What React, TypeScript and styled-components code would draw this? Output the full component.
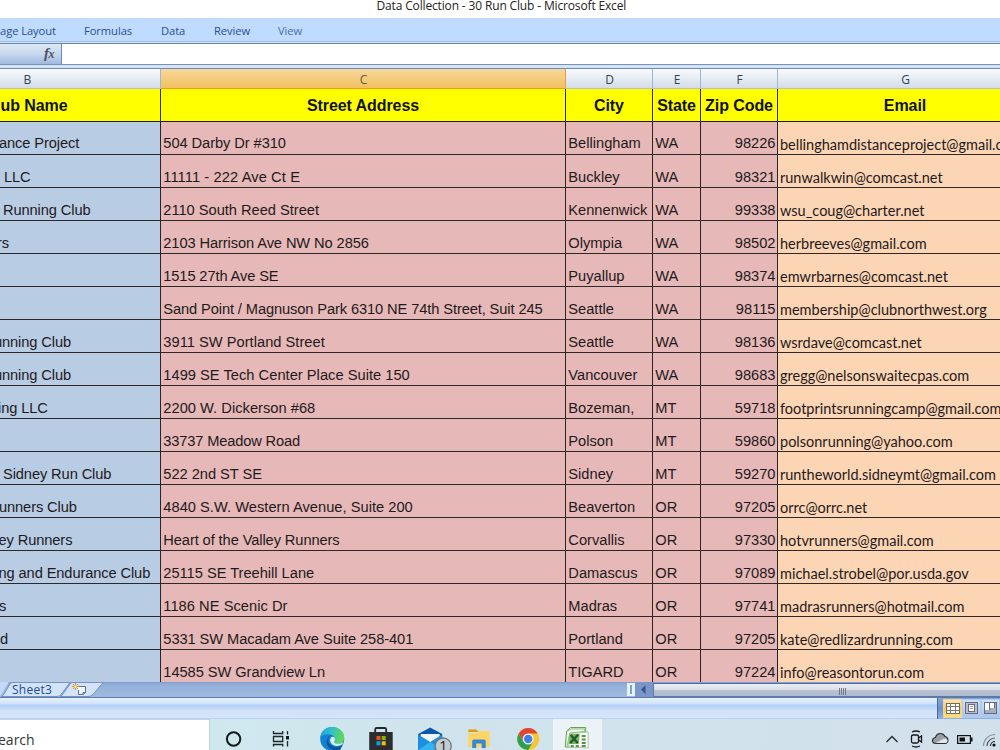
import React from "react";
import styled, { createGlobalStyle } from "styled-components";

const ui = `"Open Sans", "Noto Sans", sans-serif`;

const Global = createGlobalStyle`
  * { box-sizing: border-box; }
  body { margin: 0; background: #fff; overflow: hidden; }
`;

const Window = styled.div`
  width: 1000px;
  height: 750px;
  overflow: hidden;
  display: flex;
  flex-direction: column;
  background: #fff;
`;

const TitleBar = styled.header`
  height: 18px;
  padding-left: 376.5px;
  font: 12px/12px ${ui};
  letter-spacing: -0.15px;
  color: #222;
  white-space: nowrap;
`;

const Ribbon = styled.nav`
  height: 26px;
  display: flex;
  background: linear-gradient(#bfdbff 0 23px, #a5c2e6 23px 24px, #cfe0f5 24px 25px, #6788b3 25px);
  font: 11.2px/25px ${ui};
  letter-spacing: -0.08px;
  color: #2b4e94;
  white-space: nowrap;
`;

const RibbonTab = styled.span<{ $w: number; $soft?: boolean }>`
  width: ${(p) => p.$w}px;
  flex: none;
  color: ${(p) => (p.$soft ? "#4d6ea9" : "inherit")};
`;

const FormulaBar = styled.div`
  height: 25px;
  display: flex;
  background: linear-gradient(#fff 0 20px, #6e93c3 20px 21px, #d8e4f3 21px 24px, #6a8cba 24px);
`;

const FxButton = styled.div`
  width: 62px;
  height: 20px;
  padding-left: 44px;
  border-right: 1px solid #6e8db5;
  background: linear-gradient(#dfe9f6, #c4d5ec 55%, #9fb9de);
  font: italic bold 15px/18px "Liberation Serif", serif;
  color: #4c5261;
  letter-spacing: -0.5px;
  small { font-size: 12px; }
`;

const Sheet = styled.main`
  height: 613px;
  flex: none;
  overflow: hidden;
`;

const columns = "161px 405px 87px 48px 77px 255px";

const Letters = styled.div`
  display: grid;
  grid-template-columns: ${columns};
  height: 20px;
`;

const Letter = styled.div<{ $active?: boolean; $clip?: number }>`
  height: 20px;
  padding: 1px ${(p) => p.$clip ?? 0}px 0 1px;
  text-align: center;
  font: 12px/19px ${ui};
  color: ${(p) => (p.$active ? "#5c5c48" : "#33444f")};
  border-right: 1px solid ${(p) => (p.$active ? "#ee9a42" : "#9eb6ce")};
  border-bottom: 1px solid ${(p) => (p.$active ? "#f29536" : "#b4c3d2")};
  background: ${(p) =>
    p.$active ? "linear-gradient(#f8d79b, #f1c15f)" : "linear-gradient(#f8fafc, #e6ecf3 50%, #d3dbe8)"};
`;

const Row = styled.div`
  display: grid;
  grid-template-columns: ${columns};
  height: 33px;
`;

const Head = styled.div<{ $clip?: number }>`
  height: 33px;
  padding: 1px ${(p) => p.$clip ?? 0}px 0 0;
  background: #ffff00;
  border-right: 1px solid #2b2b10;
  border-bottom: 1px solid #1e1e08;
  font: bold 16px/31px "Liberation Sans", Arial, sans-serif;
  letter-spacing: -0.08px;
  text-align: ${(p) => (p.$clip ? "right" : "center")};
  white-space: nowrap;
  color: #111;
`;

const Cell = styled.div<{ $tone: "blue" | "rose" | "peach"; $right?: boolean; $track?: number; $indent?: number; $up?: boolean }>`
  height: 33px;
  padding: ${(p) => (p.$up ? 7 : 8)}px ${(p) => (p.$right ? 1.5 : 2)}px 0 ${(p) => (p.$tone === "rose" ? 2.3 : 2)}px;
  text-indent: ${(p) => p.$indent ?? 0}px;
  background: ${(p) => ({ blue: "#b8cce4", rose: "#e6b8b7", peach: "#fcd5b4" })[p.$tone]};
  border-right: 1px solid #2e2323;
  border-bottom: 1px solid #2e2828;
  font-family: ${(p) => (p.$tone === "peach" ? `Lato, sans-serif` : `"Liberation Sans", Arial, sans-serif`)};
  font-size: ${(p) => (p.$tone === "peach" ? 14.5 : 14.67)}px;
  line-height: 29px;
  color: #1f1a1c;
  text-align: ${(p) => (p.$right ? "right" : "left")};
  letter-spacing: ${(p) => p.$track ?? 0}px;
  white-space: nowrap;
  overflow: hidden;
`;

/* name, name indent, street, street tracking, city, state, zip, email */
type Club = [string, number, string, number, string, string, string, string];
const clubs: Club[] = [
  ["ance Project", -3, "504 Darby Dr #310", -0.07, "Bellingham", "WA", "98226", "bellinghamdistanceproject@gmail.com"],
  ["LLC", 2, "11111 - 222 Ave Ct E", 0.1, "Buckley", "WA", "98321", "runwalkwin@comcast.net"],
  ["Running Club", 1, "2110 South Reed Street", -0.02, "Kennenwick", "WA", "99338", "wsu_coug@charter.net"],
  ["rs", -5, "2103 Harrison Ave NW No 2856", -0.1, "Olympia", "WA", "98502", "herbreeves@gmail.com"],
  ["", 0, "1515 27th Ave SE", -0.12, "Puyallup", "WA", "98374", "emwrbarnes@comcast.net"],
  ["", 0, "Sand Point / Magnuson Park 6310 NE 74th Street, Suit 245", -0.11, "Seattle", "WA", "98115", "membership@clubnorthwest.org"],
  ["unning Club", -8, "3911 SW Portland Street", 0.02, "Seattle", "WA", "98136", "wsrdave@comcast.net"],
  ["unning Club", -8, "1499 SE Tech Center Place Suite 150", 0.02, "Vancouver", "WA", "98683", "gregg@nelsonswaitecpas.com"],
  ["ing LLC", -4, "2200 W. Dickerson #68", 0.02, "Bozeman,", "MT", "59718", "footprintsrunningcamp@gmail.com"],
  ["", 0, "33737 Meadow Road", -0.16, "Polson", "MT", "59860", "polsonrunning@yahoo.com"],
  ["Sidney Run Club", 1, "522 2nd ST SE", -0.04, "Sidney", "MT", "59270", "runtheworld.sidneymt@gmail.com"],
  ["unners Club", -3, "4840 S.W. Western Avenue, Suite 200", 0.02, "Beaverton", "OR", "97205", "orrc@orrc.net"],
  ["ey Runners", -3.5, "Heart of the Valley Runners", -0.1, "Corvallis", "OR", "97330", "hotvrunners@gmail.com"],
  ["ng and Endurance Club", -3.5, "25115 SE Treehill Lane", -0.02, "Damascus", "OR", "97089", "michael.strobel@por.usda.gov"],
  ["s", -3, "1186 NE Scenic Dr", 0.04, "Madras", "OR", "97741", "madrasrunners@hotmail.com"],
  ["d", -2, "5331 SW Macadam Ave Suite 258-401", -0.07, "Portland", "OR", "97205", "kate@redlizardrunning.com"],
  ["", 0, "14585 SW Grandview Ln", -0.06, "TIGARD", "OR", "97224", "info@reasontorun.com"],
];

const TabBar = styled.div`
  height: 16px;
  flex: none;
  display: flex;
  background: linear-gradient(#7f9fd0, #93b0da 3px, #9fb9de 13px, #9cb7dd 15px, #5a7db4 15px);
`;

const SheetTabs = styled.div`
  position: relative;
  width: 627px;
  height: 15px;
`;

const TabName = styled.span`
  position: absolute;
  left: 12px;
  top: 0;
  font: 12px/16px ${ui};
  letter-spacing: 0.25px;
  color: #25489a;
`;

const SplitHandle = styled.div`
  width: 8px;
  height: 13px;
  margin-top: 1px;
  border: 2px solid #e8f2fc;
  border-width: 2px 3px;
  background: #7ea2ce;
`;

const ScrollArrow = styled.div`
  width: 18px;
  height: 15px;
  background: #7997c9;
  svg { display: block; }
`;

const Thumb = styled.div`
  flex: 1;
  height: 14px;
  margin-top: 1px;
  padding: 4px 0 0 185px;
  display: flex;
  gap: 1px;
  border: 1px solid #64779c;
  border-right: 0;
  border-top-color: #4f6ca8;
  background: linear-gradient(#e9edf4, #dbe0e9 45%, #b9c1d0 55%, #aebbd0);
`;

const Grip = styled.i`
  width: 1px;
  height: 7px;
  background: #747b88;
`;

const StatusBar = styled.footer`
  height: 21px;
  flex: none;
  display: flex;
  justify-content: flex-end;
  background: linear-gradient(#e9f2fe, #cfe1fb 6px, #b4d1f6 7px, #bcd6f9 10px, #cfe0f8 12px, #d7e5f9 20px, #b5d3fa 20px);
`;

const ViewPanel = styled.div`
  width: 63px;
  height: 21px;
  padding: 1px 0 1px 5px;
  border-left: 1px solid #46679f;
  background: linear-gradient(#86a9db, #6a90cb 50%, #8eb1e2);
  display: flex;
`;

const ViewButton = styled.div<{ $on?: boolean }>`
  width: 19px;
  height: 19px;
  flex: none;
  border: 1px solid ${(p) => (p.$on ? "#f3d58e" : "#aecbf0")};
  background: ${(p) => (p.$on ? "linear-gradient(#fde3ae, #f9c659 50%, #fbe08a)" : "linear-gradient(#cfe1f9, #a9c6ec)")};
  svg { display: block; }
`;

const TaskBar = styled.div`
  height: 31px;
  flex: none;
  display: flex;
  background: linear-gradient(90deg, #cfe8ee 209px, #d0e3ec 480px, #d2e0eb 1000px);
`;

const Search = styled.div`
  width: 210px;
  height: 31px;
  background: #fff;
  border-top: 1px solid #c9d3dc;
  border-right: 1px solid #c8d2d6;
  font: 14px/40px ${ui};
  color: #333;
  text-indent: -2px;
`;

const AppSlot = styled.div<{ $open?: boolean }>`
  width: 49px;
  height: 31px;
  background: ${(p) => (p.$open ? "#ebf3f9" : "transparent")};
  svg { display: block; }
`;

const Tray = styled.div`
  margin-left: auto;
  width: 120px;
  svg { display: block; }
`;

const Slot = ({ children, open }: { children: React.ReactNode; open?: boolean }) => (
  <AppSlot $open={open}>
    <svg width="49" height="31" viewBox="1.3 0 49 31">{children}</svg>
  </AppSlot>
);

export default function App() {
  return (
    <>
      <Global />
      <Window>
        <TitleBar>Data Collection - 30 Run Club - Microsoft Excel</TitleBar>
        <Ribbon>
          <RibbonTab $w={84}>age Layout</RibbonTab>
          <RibbonTab $w={77}>Formulas</RibbonTab>
          <RibbonTab $w={53}>Data</RibbonTab>
          <RibbonTab $w={64}>Review</RibbonTab>
          <RibbonTab $w={60} $soft>View</RibbonTab>
        </Ribbon>
        <FormulaBar>
          <FxButton>f<small>x</small></FxButton>
        </FormulaBar>
        <Sheet>
          <Letters>
            <Letter $clip={106}>B</Letter>
            <Letter $active>C</Letter>
            <Letter>D</Letter>
            <Letter>E</Letter>
            <Letter>F</Letter>
            <Letter>G</Letter>
          </Letters>
          <Row>
            <Head $clip={92.5}>ub Name</Head>
            <Head>Street Address</Head>
            <Head>City</Head>
            <Head>State</Head>
            <Head>Zip Code</Head>
            <Head>Email</Head>
          </Row>
          {clubs.map(([name, indent, street, track, city, state, zip, email], i) => (
            <Row key={i}>
              <Cell $tone="blue" $indent={indent} $track={-0.11} $up={i === 0}>{name}</Cell>
              <Cell $tone="rose" $track={track} $up={i === 0}>{street}</Cell>
              <Cell $tone="rose" $up={i === 0}>{city}</Cell>
              <Cell $tone="rose" $up={i === 0}>{state}</Cell>
              <Cell $tone="rose" $up={i === 0} $right>{zip}</Cell>
              <Cell $tone="peach">{email}</Cell>
            </Row>
          ))}
        </Sheet>
        <TabBar>
          <SheetTabs>
            <svg width="110" height="15" viewBox="0 0 110 15">
              <path d="M-5 0H9L1 13Q0 14.500-5 14.500Z" fill="#c3daf6" />
              <path d="M1 14.500Q3 14 4 12L10 2Q11 .5 13 .5H70L61 12.500Q60 14.500 57 14.500Z" fill="#d3e4f9" stroke="#7695c4" />
              <path d="M60 14.500Q62 14 63 12L70 2Q71 .5 73 .5H103L93 12.500Q91 14.500 88 14.500Z" fill="#d3e4f9" stroke="#7695c4" />
              <path d="M77 4.500H85.500V10.500L83 12.500H78.500V8" fill="#eef4fb" stroke="#5c6f96" />
              <path d="M83 12.500V10.500H85.500" fill="none" stroke="#5c6f96" />
              <path d="M75.500 1V8M72 4.500H79M73 2L78 7M78 2L73 7" stroke="#e58a22" />
              <circle cx="75.500" cy="4.500" r="1.300" fill="#fff1b8" />
            </svg>
            <TabName>Sheet3</TabName>
          </SheetTabs>
          <SplitHandle />
          <ScrollArrow>
            <svg width="18" height="15"><path d="M10.500 3V12L6 7.500Z" fill="#3c5485" /></svg>
          </ScrollArrow>
          <Thumb><Grip /><Grip /><Grip /><Grip /></Thumb>
        </TabBar>
        <StatusBar>
          <ViewPanel>
            <ViewButton $on>
              <svg width="17" height="17">
                <rect x="2.500" y="3.500" width="13" height="10" fill="#fff" stroke="#6f6a61" />
                <path d="M6.500 3V14M11.500 3V14M2 6.500H16M2 10.500H16" stroke="#7d7768" />
              </svg>
            </ViewButton>
            <ViewButton>
              <svg width="17" height="17">
                <rect x="2.500" y="2.500" width="12" height="11" fill="#b9bec8" stroke="#666d7a" />
                <rect x="5.500" y="4.500" width="6" height="7" fill="#fff" stroke="#666d7a" />
                <path d="M7 6.500H10M7 8.500H10" stroke="#9aa0ab" />
              </svg>
            </ViewButton>
            <ViewButton>
              <svg width="17" height="17">
                <rect x="2.500" y="2.500" width="12" height="11" fill="#a8adb8" stroke="#666d7a" />
                <path d="M3 3H7V10H3ZM8 3H12V8H8Z" fill="#fff" />
                <path d="M7.500 3V10M12.500 3V8" stroke="#666d7a" />
              </svg>
            </ViewButton>
          </ViewPanel>
        </StatusBar>
        <TaskBar>
          <Search>earch</Search>
          <Slot><circle cx="24.900" cy="20" r="6.700" fill="none" stroke="#161819" strokeWidth="2" /></Slot>
          <Slot>
            <g fill="none" stroke="#202526" strokeWidth="1.300">
              <path d="M15.800 12V14.500H25V12M15.800 27.500V25.500H25V27.500M15.800 17.500H25V22.500H15.800ZM29.800 12V15.500M29.800 22V27.500" />
            </g>
            <rect x="28.300" y="17" width="3" height="3.500" fill="#161819" />
          </Slot>
          <Slot>
            <defs>
              <linearGradient id="edgeTop" x1="0" y1="0.200" x2="1" y2="0.400">
                <stop offset="0" stopColor="#1e9fda" />
                <stop offset="0.450" stopColor="#30c0cf" />
                <stop offset="1" stopColor="#66d94d" />
              </linearGradient>
            </defs>
            <circle cx="25.500" cy="20" r="12" fill="#1182d2" />
            <path d="M13.500 19C14 12 19 8 25.500 8C32.500 8 37.500 13 37.500 18.500C37.500 23 34 25 31 25C27.500 25 27 23.500 28 22C29 20 28 16.500 24 15.500C19 14.500 15 16 13.500 19Z" fill="url(#edgeTop)" />
            <path d="M24 16.500C20 19 20.500 26 28 28C31 28.500 34 27.500 36 25.500L33.500 31H26C20 29 17 20 24 16.500Z" fill="#0d559f" />
            <path d="M24 19C25 17 28 17.500 28.300 20C28.500 22 27 22.500 27.500 23.500C28.500 25.300 33.500 25.500 36.500 23L35.500 25.500C31.500 28 25.500 27 24 23.500C23.300 22 23.200 20.500 24 19Z" fill="#d7eef4" />
          </Slot>
          <Slot>
            <path d="M19.500 14V10.500Q19.500 9 21 9H29Q30.500 9 30.500 10.500V14" fill="none" stroke="#24282b" strokeWidth="1.800" />
            <path d="M13.500 13H37V31H13.500Z" fill="#2b2d30" />
            <rect x="20.800" y="17" width="4" height="4" fill="#f25022" />
            <rect x="26" y="17" width="4" height="4" fill="#7fba00" />
            <rect x="20.800" y="22.300" width="4" height="4" fill="#00a4ef" />
            <rect x="26" y="22.300" width="4" height="4" fill="#ffb900" />
          </Slot>
          <Slot>
            <path d="M13.500 15L25.500 8.500L37.500 15V31H13.500Z" fill="#0b59ae" />
            <path d="M16 15H35V24H16Z" fill="#f2f5f8" />
            <path d="M13.500 15.500L25.500 23L37.500 15.500V31H13.500Z" fill="#1c8fe0" />
            <path d="M13.500 31L25.500 23L30 26V31Z" fill="#35b3ef" />
            <circle cx="38.500" cy="27" r="8" fill="#c3ccd1" stroke="#70797e" strokeWidth="1.300" />
            <text x="34.500" y="32" fontFamily="Open Sans" fontSize="14" fill="#222">1</text>
          </Slot>
          <Slot>
            <path d="M14.500 11.500Q14.500 10.500 15.500 10.500H22.500L25 13H14.500Z" fill="#e19b0b" />
            <path d="M14.500 14H23.500L25.500 12H34.500Q36 12 36 13.500V28H14.500Z" fill="#fdd565" />
            <path d="M18.500 29V22Q18.500 20.500 20 20.500H30.500Q32 20.500 32 22V29H28V24.500H22.500V29Z" fill="#3688d2" />
          </Slot>
          <Slot>
            <circle cx="25.500" cy="20" r="11" fill="#f6c62c" />
            <path d="M16 14.500A11 11 0 0 1 35 14.500H25.500L20.700 22.700Z" fill="#df4536" />
            <path d="M16 14.500A11 11 0 0 0 25.500 31L30.300 22.800L20.700 22.800Z" fill="#2f9e50" />
            <circle cx="25.500" cy="20" r="5.500" fill="#eef5f4" />
            <circle cx="25.500" cy="20" r="4.200" fill="#3f7fe8" />
          </Slot>
          <Slot open>
            <path d="M15 12L19 8.500H34V25L31 28L13.500 28Z" fill="#e4f3df" stroke="#61a34f" />
            <path d="M16 12L19.500 10H33V12.500L18 14L15.500 27" fill="#f7fcf4" stroke="#8abf76" />
            <path d="M18 14.500L36.500 13V29L17 28Z" fill="#f9fcf8" stroke="#9db896" strokeWidth="0.800" />
            <path d="M18 15H28L27 25H17Z" fill="#78b45c" />
            <path d="M19 16L26 24M26.500 15.500L18.500 24" stroke="#1f5a2c" strokeWidth="2.200" />
            <path d="M30 17H34M30 20.500H34M30 24H34M19 27H22M24 27H27M30 27H34" stroke="#559449" strokeWidth="2" />
          </Slot>
          <Tray>
            <svg width="120" height="31" viewBox="0 0 120 31">
              <path d="M6.500 23L12 17.500L17.500 23" fill="none" stroke="#25282b" strokeWidth="1.300" />
              <g fill="none" stroke="#16191c" strokeWidth="1.300">
                <rect x="31.500" y="16" width="7" height="8" rx="1.500" />
                <path d="M38.500 19L41.500 17V23L38.500 21M32 13Q36 11 40 13M32 27Q36 29 40 27" />
              </g>
              <path d="M56 24.500Q52.500 24.500 52.500 21.500Q52.500 19 55.500 18.500Q56.500 14.500 60.500 14.500Q63.500 14.500 65 17.500Q68 18 68 21.500Q67.500 24.500 65 24.500Z" fill="#999fa2" stroke="#292c2e" strokeWidth="1.100" />
              <path d="M56 24L64 19.500Q67.500 20 67.500 22Q67 24 65 24Z" fill="#e4e7e9" />
              <rect x="77.600" y="16.600" width="12.800" height="7.800" fill="none" stroke="#111" strokeWidth="1.200" />
              <path d="M79.500 18.500H85V22.500H79.500ZM91 18.500H92.500V22.500H91Z" fill="#111" />
              <g fill="none" stroke="#8a9298" strokeWidth="1.200">
                <path d="M103.500 27A11.500 11.500 0 0 1 115 15.500" />
                <path d="M107 27A8 8 0 0 1 115 19" stroke="#555b60" />
                <path d="M110.500 27A4.500 4.500 0 0 1 115 22.500" stroke="#25282b" />
              </g>
              <circle cx="114" cy="26" r="1.600" fill="#111" />
            </svg>
          </Tray>
        </TaskBar>
      </Window>
    </>
  );
}
